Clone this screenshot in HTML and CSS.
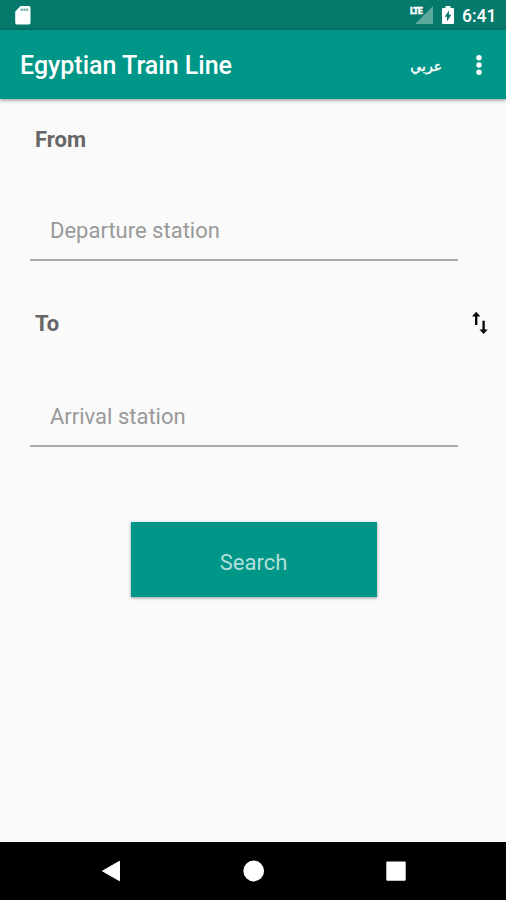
FILE: index.html
```html
<!DOCTYPE html>
<html lang="en">
<head>
<meta charset="utf-8">
<title>Egyptian Train Line</title>
<link rel="stylesheet" href="styles.css">
</head>
<body>
<div class="status">
  <svg class="sd" width="16" height="19" viewBox="0 0 16 19"><path fill="#fff" d="M5.500 0H14a1.800 1.800 0 0 1 1.500 1.800v15A1.800 1.800 0 0 1 14 18.600H2a1.800 1.800 0 0 1-1.800-1.800V5.500z"/><path stroke="#05796b" stroke-opacity=".6" stroke-width="2" d="M6.700 2.500v2.500M9.500 2.500v2.500M12.300 2.500v2.500"/></svg>
  <div class="signal"><svg width="18" height="18" viewBox="0 0 18 18"><path fill="#fff" fill-opacity=".35" d="M17 0v18H-1z"/></svg><span class="lte">LTE</span></div>
  <svg class="battery" width="12" height="18" viewBox="0 0 12 18"><path fill="#fff" d="M3.500 0h5v2H11a1 1 0 0 1 1 1v14a1 1 0 0 1-1 1H1a1 1 0 0 1-1-1V3a1 1 0 0 1 1-1h2.500z"/><path fill="#05796b" d="M7 4.500v4.300h2.300L5 15.500v-4.800H2.700z"/></svg>
  <span class="time">6:41</span>
</div>
<header class="bar">
  <h1 class="title">Egyptian Train Line</h1>
  <span class="lang" lang="ar" dir="rtl">عربي</span>
  <svg class="more" width="6" height="20" viewBox="0 0 6 20" fill="#fff"><circle cx="3" cy="2.700" r="2.700"/><circle cx="3" cy="10" r="2.700"/><circle cx="3" cy="17.300" r="2.700"/></svg>
</header>
<main class="content">
  <div class="row"><label class="label" for="from">From</label></div>
  <input class="field" id="from" placeholder="Departure station">
  <div class="row row-to"><label class="label" for="to">To</label>
    <svg class="swap" width="18" height="24" viewBox="0 0 18 24"><path fill="none" stroke="#000" stroke-width="2.300" d="M5.200 3.500v10.500M12.600 9.800v10"/><path d="M5.200 .7 9.400 5.400H1zM12.600 23 8.400 18.400h8.400z"/></svg>
  </div>
  <input class="field field-to" id="to" placeholder="Arrival station">
  <button class="search">Search</button>
</main>
<nav class="nav">
  <svg width="20" height="22" viewBox="0 0 20 22"><path fill="#fff" stroke="#fff" stroke-linejoin="round" d="M18.500 1.300v19.400L1.500 11z"/></svg>
  <svg width="22" height="22" viewBox="0 0 22 22"><circle cx="10.700" cy="11" r="10.400" fill="#fff"/></svg>
  <svg width="20" height="22" viewBox="0 0 20 22"><rect x=".3" y="1.500" width="19.400" height="19.200" rx="1" fill="#fff"/></svg>
</nav>
</body>
</html>
```
FILE: styles.css
```css
* { box-sizing: border-box; }
body {
  margin: 0;
  width: 506px;
  height: 900px;
  display: flex;
  flex-direction: column;
  overflow: hidden;
  background: #fafafa;
  font-family: Roboto, "DejaVu Sans", sans-serif;
}
.status {
  height: 30px;
  flex: none;
  display: flex;
  align-items: flex-start;
  padding: 6px 10px 0 15px;
  background: #05796b;
  color: #fff;
}
.signal {
  position: relative;
  width: 18px;
  height: 18px;
  margin-left: auto;
  margin-right: 8px;
}
.signal svg { display: block; }
.lte {
  position: absolute;
  left: -6px;
  top: 1px;
  font-size: 9px;
  line-height: 9px;
  font-weight: 900;
  letter-spacing: -1px;
  -webkit-text-stroke: .3px #fff;
}
.time {
  width: 33px;
  margin-left: 8px;
  margin-right: 1px;
  font-size: 17.500px;
  line-height: 20px;
  font-weight: 500;
  white-space: nowrap;
}
.bar {
  height: 69px;
  flex: none;
  display: flex;
  align-items: center;
  padding: 2px 24px 0 20px;
  background: #009688;
  color: #fff;
  box-shadow: 0 1px 4px rgba(0, 0, 0, .45);
}
.title {
  margin: 0;
  flex: 1;
  padding-top: 1px;
  font-size: 25px;
  line-height: 30px;
  font-weight: 500;
}
.more { margin-top: -2px; }
.lang {
  margin-right: 34px;
  font-family: "DejaVu Sans", sans-serif;
  font-size: 14px;
  line-height: 24px;
  -webkit-text-stroke: .4px #fff;
}
.content {
  flex: 1;
  display: flex;
  flex-direction: column;
  padding: 26px 17px 0 30px;
}
.row {
  height: 30px;
  display: flex;
  align-items: center;
  padding-left: 5px;
}
.row-to {
  justify-content: space-between;
  margin-top: 48px;
}
.label {
  font-size: 22px;
  line-height: 30px;
  font-weight: 700;
  color: #666;
}
.swap { margin-top: -3px; }
.field {
  width: 428px;
  height: 56px;
  margin-top: 50px;
  padding: 0 20px 3px;
  border: 0;
  border-bottom: 2px solid #aaa;
  border-radius: 0;
  outline: 0;
  background: transparent;
  font: 400 22px/28px Roboto, sans-serif;
}
.field-to { margin-top: 52px; }
.field::placeholder { color: #999; opacity: 1; }
.search {
  width: 246px;
  height: 75px;
  margin: 75px 0 0 101px;
  padding: 6px 1px 0 0;
  border: 0;
  background: #009688;
  color: #b2dfdb;
  font: 400 22px/28px Roboto, sans-serif;
  box-shadow: 0 1px 3px rgba(0, 0, 0, .4);
}
.nav {
  height: 58px;
  flex: none;
  display: flex;
  align-items: center;
  justify-content: space-between;
  padding: 0 100px 0 101px;
  background: #000;
}
```
